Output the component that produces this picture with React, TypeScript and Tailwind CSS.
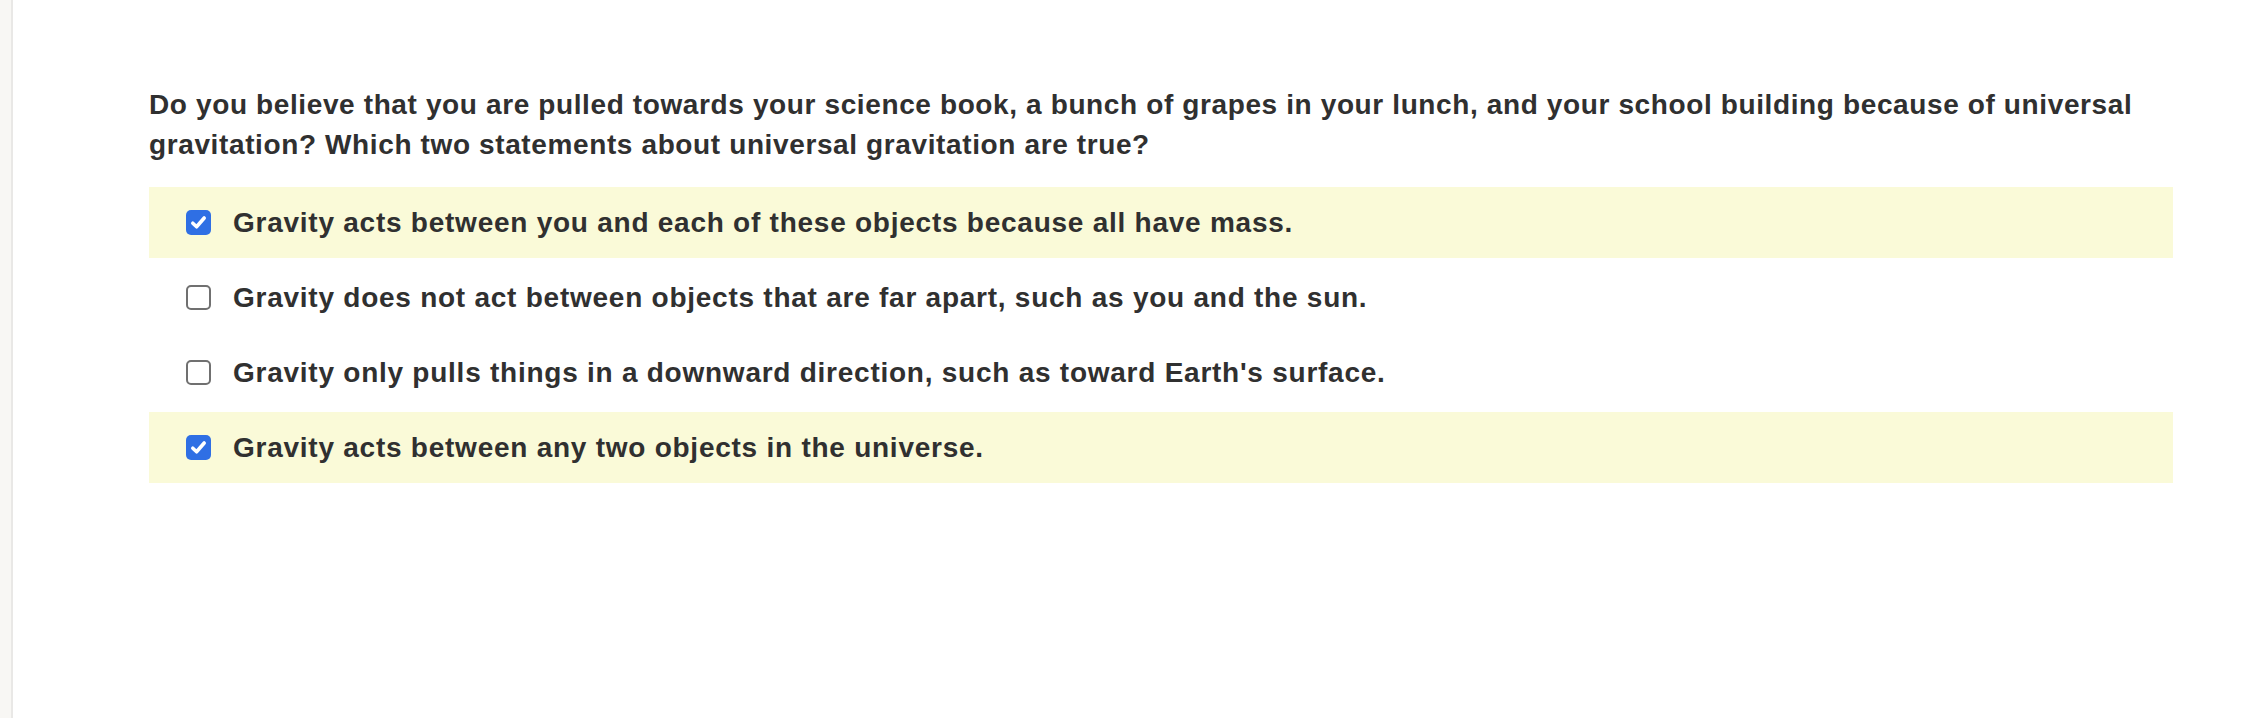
import React from 'react'

const options = [
    { text: 'Gravity acts between you and each of these objects because all have mass.', checked: true },
    { text: 'Gravity does not act between objects that are far apart, such as you and the sun.', checked: false },
    { text: "Gravity only pulls things in a downward direction, such as toward Earth's surface.", checked: false },
    { text: 'Gravity acts between any two objects in the universe.', checked: true },
]

const Box = ({ checked }: { checked: boolean }) => {
    if (checked) {
        return (
            <span className="flex h-[25px] w-[25px] shrink-0 items-center justify-center rounded-[5px] bg-[#2f6fe4]">
                <svg width="19" height="19" viewBox="0 0 16 16" fill="none">
                    <path d="M3.2 8.6 L6.4 11.6 L12.8 4.2" stroke="white" strokeWidth="3" strokeLinecap="round" strokeLinejoin="round" />
                </svg>
            </span>
        )
    }
    return <span className="h-[25px] w-[25px] shrink-0 rounded-[5px] border-2 border-[#707070] bg-white" />
}

export default function App() {
    return (
        <div className="flex min-h-[718px] bg-white font-['Liberation_Sans',Arial,sans-serif] text-[#303030]">
            {/* left rail */}
            <div className="w-[11px] shrink-0 bg-[#f8f7f4]" />
            <div className="w-[2px] shrink-0 bg-[#e9e8e6]" />

            <div className="flex-1 pl-[136px] pt-[85px]">
                <div className="w-[2024px]">
                    <p className="text-[28px] font-bold leading-[40px] tracking-[0.62px]">
                        Do you believe that you are pulled towards your science book, a bunch of grapes in your lunch, and your school building because of universal gravitation? Which two statements about universal gravitation are true?
                    </p>

                    <div className="mt-[22px] flex flex-col gap-[4px]">
                        {options.map((o, i) => (
                            <label
                                key={i}
                                className={`flex h-[71px] items-center gap-[22px] pl-[37px] ${o.checked ? 'bg-[#fafad8]' : ''}`}
                            >
                                <Box checked={o.checked} />
                                <span className="text-[28px] font-bold leading-[40px] tracking-[0.75px]">{o.text}</span>
                            </label>
                        ))}
                    </div>
                </div>
            </div>
        </div>
    )
}
